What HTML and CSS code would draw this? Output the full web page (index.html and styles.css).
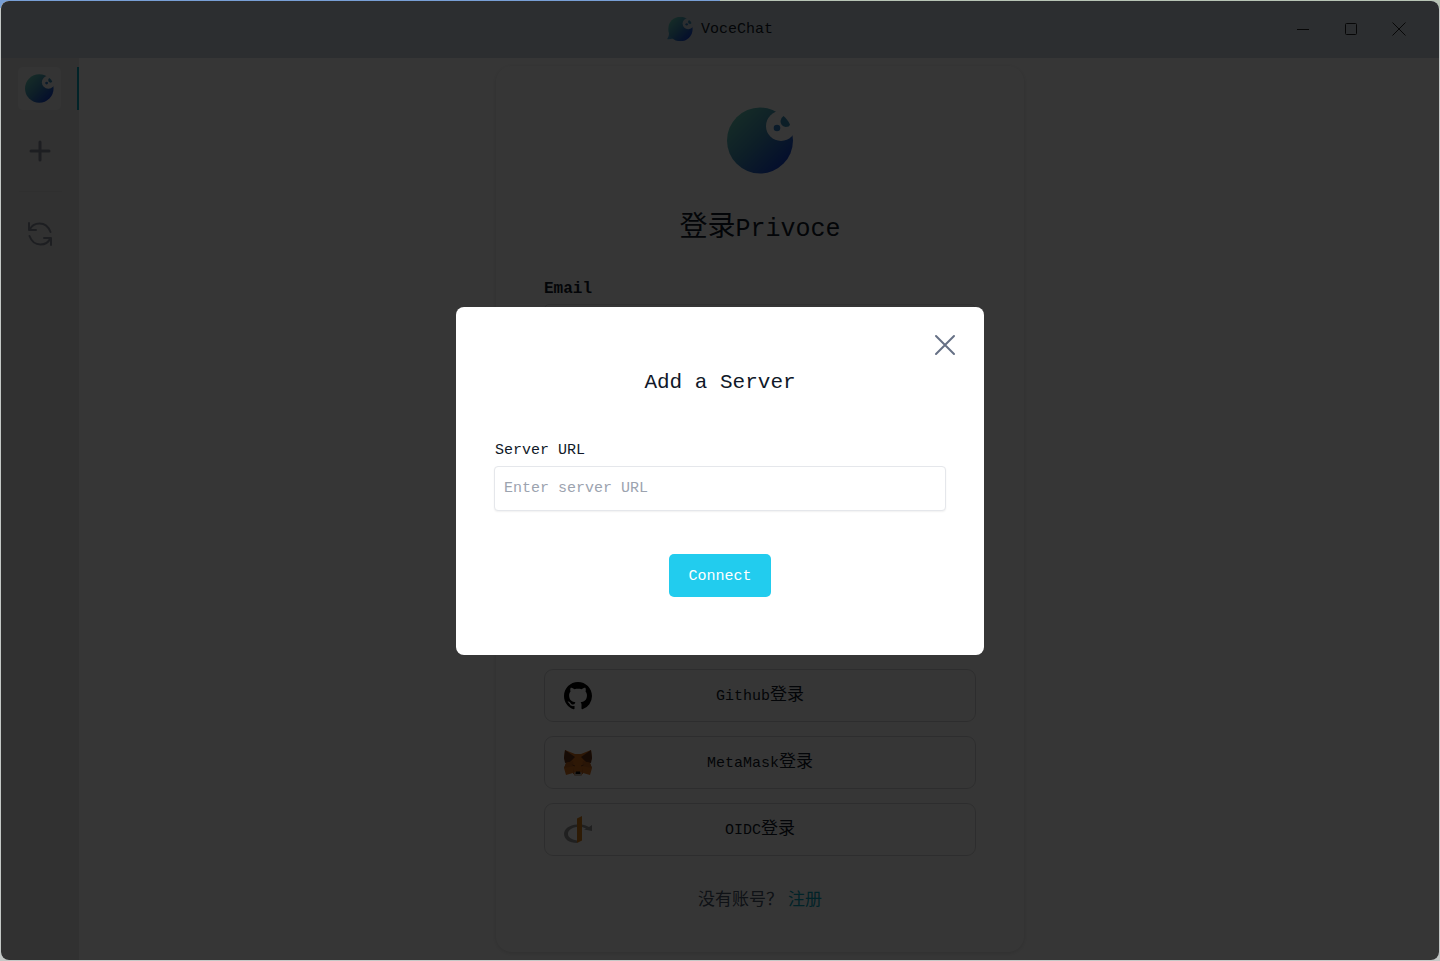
FILE: index.html
```html
<!DOCTYPE html>
<html lang="zh-CN">
<head>
<meta charset="utf-8">
<title>VoceChat</title>
<link rel="stylesheet" href="styles.css">
</head>
<body>
<svg class="defs" aria-hidden="true">
  <defs>
    <linearGradient id="brand" x1="0.1" y1="0.1" x2="0.85" y2="0.85">
      <stop offset="0" stop-color="#68cfb8"/>
      <stop offset="0.5" stop-color="#4090b8"/>
      <stop offset="1" stop-color="#1646d0"/>
    </linearGradient>
    <mask id="bite">
      <rect width="67" height="67" fill="#fff"/>
      <circle cx="54" cy="19" r="15" fill="#000"/>
    </mask>
    <symbol id="moon" viewBox="0 0 67 67">
      <circle cx="33" cy="33.5" r="33" fill="url(#brand)" mask="url(#bite)"/>
      <circle cx="50" cy="21" r="3.3" fill="#307fc8"/>
      <path d="M56.500 9Q60 11.500 63 17.500Q62.500 20 58.500 20Q53.500 19 53.500 14Q54 10.500 56.500 9Z" fill="#3c90b8"/>
    </symbol>
  </defs>
</svg>
<div class="window">
  <header class="titlebar">
    <div class="brand">
      <svg width="26" height="26" viewBox="0 0 70 67"><path d="M5 38Q7 52 1 59Q0 62 5 61Q14 61 22 57Z" fill="#4698c8"/><use href="#moon" x="3" width="67" height="67"/></svg>
      <span>VoceChat</span>
    </div>
    <div class="controls">
      <button aria-label="Minimize"><svg width="14" height="14" viewBox="0 0 14 14"><path d="M1 7.500H13"/></svg></button>
      <button aria-label="Maximize"><svg width="14" height="14" viewBox="0 0 14 14"><rect x="1.500" y="1.500" width="11" height="11" rx="1"/></svg></button>
      <button aria-label="Close window"><svg width="14" height="14" viewBox="0 0 14 14"><path d="M0.500 0.500L13.500 13.500M13.500 0.500L0.500 13.500"/></svg></button>
    </div>
  </header>
  <div class="body">
    <nav class="sidebar">
      <div class="server"><button class="tile" aria-label="VoceChat server"><svg width="29" height="29"><use href="#moon"/></svg></button></div>
      <button class="tool" aria-label="Add server"><svg width="22" height="22" viewBox="0 0 22 22"><path d="M11 2V20M2 11H20"/></svg></button>
      <hr>
      <button class="tool" aria-label="Refresh"><svg width="26" height="26" viewBox="0 0 26 26"><path d="M2 2V9H9M2.500 9C6 1 19-1 23.500 11M24 24V17H17M23.500 17C20 25 7 27 2.500 15"/></svg></button>
    </nav>
    <main class="content">
      <section class="card">
        <svg class="logo" width="67" height="67"><use href="#moon"/></svg>
        <h1><span class="han">登录</span>Privoce</h1>
        <label class="email-label" for="email">Email</label>
        <input class="email" id="email" type="email">
        <div class="providers">
          <button class="provider">
            <svg width="28" height="28" viewBox="0 0 16 16"><path fill="#000" d="M8 0C3.580 0 0 3.580 0 8c0 3.540 2.290 6.530 5.470 7.590.4.070.55-.17.55-.38 0-.19-.010-.82-.010-1.490-2.010.37-2.530-.49-2.690-.94-.09-.23-.48-.94-.82-1.130-.28-.15-.68-.52-.010-.53.63-.010 1.080.58 1.230.82.72 1.210 1.870.87 2.330.66.070-.52.28-.87.51-1.070-1.780-.2-3.640-.89-3.640-3.950 0-.87.31-1.590.82-2.150-.08-.2-.36-1.020.08-2.120 0 0 .67-.21 2.200.82.64-.18 1.320-.27 2-.27s1.360.09 2 .27c1.530-1.040 2.200-.82 2.200-.82.44 1.100.16 1.920.08 2.120.51.56.82 1.270.82 2.150 0 3.070-1.870 3.750-3.650 3.950.29.25.54.73.54 1.480 0 1.070-.010 1.930-.010 2.200 0 .21.15.46.55.38A8.010 8.010 0 0 0 16 8c0-4.420-3.580-8-8-8z"/></svg>
            <span>Github<span class="han">登录</span></span>
          </button>
          <button class="provider">
            <svg width="28" height="28" viewBox="0 0 28 28"><path fill="#d9711e" d="M1 1L11 5H17L27 1L28 9L26 14L28 19L26 26L19 24L17 27H11L9 24L2 26L0 19L2 14L0 9Z"/><path fill="#6a3418" d="M1 1L11 8L6 13L1 14L0 9ZM27 1L17 8L22 13L27 14L28 9Z"/><path fill="#c0651e" d="M2 14L9 12L10 17L0 19ZM26 14L19 12L18 17L28 19ZM9 19L11 25H9ZM19 19L17 25H19Z"/><path fill="#6a3418" d="M7.500 15.500L11 16.500L10.500 17.500ZM20.500 15.500L17 16.500L17.500 17.500Z"/><path fill="#c8b8ac" d="M10 23.500H18L17 27H11Z"/><path fill="#111" d="M12 22.500H16L16.500 25H11.500Z"/></svg>
            <span>MetaMask<span class="han">登录</span></span>
          </button>
          <button class="provider">
            <svg width="28" height="28" viewBox="0 0 28 28"><path fill="#999" d="M13 27C5 27 0 23 0 18C0 13 5 9 13 8.500V11C8 11.500 4 14 4 18C4 21 7 23.500 13 24.500Z"/><path fill="#999" d="M18 8.500Q22 9 25 11L28 9V15L20 13.500L22 12.500Q20 11.500 18 11Z"/><path fill="#d98018" d="M13 2.500L18 0V24.500L13 27Z"/></svg>
            <span>OIDC<span class="han">登录</span></span>
          </button>
        </div>
        <p class="signup">没有账号？<a href="#register">注册</a></p>
      </section>
    </main>
  </div>
  <div class="backdrop">
    <dialog class="modal" open aria-labelledby="dialog-title">
      <button class="close" aria-label="Close"><svg width="22" height="22" viewBox="0 0 22 22"><path d="M2 2L20 20M20 2L2 20"/></svg></button>
      <h2 id="dialog-title">Add a Server</h2>
      <label for="server-url">Server URL</label>
      <input id="server-url" type="text" placeholder="Enter server URL">
      <button class="connect">Connect</button>
    </dialog>
  </div>
</div>
</body>
</html>
```
FILE: styles.css
```css
* { box-sizing: border-box; }
html, body { height: 100%; }
body {
  margin: 0;
  padding: 1px;
  background: linear-gradient(90deg, #789fd5 50%, #b8c4b5 50%) top / 100% 8px no-repeat, #c4c8c6;
  font: 15px/20px "Liberation Mono", "Noto Sans CJK SC", monospace;
  color: #101828;
}
button, input { font: inherit; color: inherit; }
button { padding: 0; border: 0; background: none; cursor: pointer; }
h1, h2, p { margin: 0; font-weight: 400; }
svg { display: block; fill: none; }
.defs { position: absolute; width: 0; height: 0; }
.window {
  position: relative;
  display: flex;
  flex-direction: column;
  height: 100%;
  overflow: hidden;
  border-radius: 8px;
  background: #fff;
}
.titlebar {
  display: grid;
  grid-template-columns: 1fr auto 1fr;
  align-items: center;
  height: 57px;
  padding-bottom: 2px;
  background: #d1dae1;
}
.brand { grid-column: 2; display: flex; align-items: center; gap: 8px; }
.brand span { padding-top: 2px; }
.controls { display: flex; justify-content: flex-end; gap: 16px; padding-right: 24px; }
.controls button { display: grid; place-items: center; width: 32px; height: 32px; }
.controls svg { stroke: #222; stroke-width: 1; }
.body { flex: 1; display: flex; min-height: 0; }
.sidebar {
  display: flex;
  flex-direction: column;
  align-items: center;
  width: 78px;
  padding-top: 9px;
  background: #e5e6e6;
}
.server {
  display: flex;
  justify-content: center;
  width: 100%;
  border-right: 2px solid #06a5bc;
  margin-bottom: 19px;
}
.tile { display: grid; place-items: center; width: 43px; height: 43px; border-radius: 5px; background: #f5f5f5; }
.tool { display: grid; place-items: center; width: 44px; height: 43px; }
.tool svg { stroke: #8a8f9d; stroke-width: 3; stroke-linecap: round; stroke-linejoin: round; }
.tool:last-child svg { stroke-width: 2; }
.sidebar hr { width: 43px; margin: 19px 0 20px; border: 0; border-top: 1px solid #dcdddd; }
.content { flex: 1; display: flex; justify-content: center; padding: 8px 7px 8px 9px; }
.card {
  display: flex;
  flex-direction: column;
  align-items: center;
  width: 528px;
  padding: 41px 48px 40px;
  border-radius: 16px;
  box-shadow: 0 1px 5px rgba(0, 0, 0, .14);
}
.logo { flex: none; }
.card h1 { margin-top: 35px; font-size: 25px; line-height: 40px; }
.han { font-size: 17px; }
h1 .han { font-size: 28px; }
.email-label { align-self: flex-start; margin-top: 29px; font-size: 16px; font-weight: 700; }
.email { width: 100%; height: 45px; margin-top: 5px; border: 1px solid #e0e0e3; border-radius: 5px; background: #fff; }
.providers { display: flex; flex-direction: column; gap: 14px; width: 100%; margin-top: auto; }
.provider {
  display: grid;
  grid-template-columns: 28px 1fr 28px;
  align-items: center;
  height: 53px;
  padding: 0 19px;
  border: 1px solid #d5d6d8;
  border-radius: 9px;
}
.provider > span { padding-top: 2px; }
.signup { margin-top: 34px; font-size: 17px; line-height: 22px; color: #475467; }
.signup a { margin-left: 5px; color: #06a5bc; text-decoration: none; }
.backdrop {
  position: absolute;
  inset: 0;
  display: grid;
  place-items: center;
  background: rgba(0, 0, 0, .79);
}
.modal {
  position: relative;
  display: flex;
  flex-direction: column;
  width: 528px;
  max-width: 90%;
  margin: 0;
  padding: 61px 38px 58px;
  border: 0;
  border-radius: 8px;
  background: #fff;
  color: #101828;
}
.modal h2 { margin-bottom: 43px; font-size: 21px; line-height: 30px; text-align: center; }
.modal label { padding-left: 1px; }
.modal input {
  height: 45px;
  margin: 5px 0 43px;
  padding: 0 9px;
  border: 1px solid #e5e7eb;
  border-radius: 4px;
  box-shadow: 0 1px 2px rgba(0, 0, 0, .06);
}
.modal input::placeholder { color: #9ca3af; opacity: 1; }
.connect { align-self: center; height: 43px; padding: 3px 19px 0; border-radius: 5px; background: #22ccee; color: #fff; }
.close { position: absolute; top: 22px; right: 23px; display: grid; place-items: center; width: 32px; height: 32px; }
.close svg { stroke: #667085; stroke-width: 2; stroke-linecap: round; }
```
